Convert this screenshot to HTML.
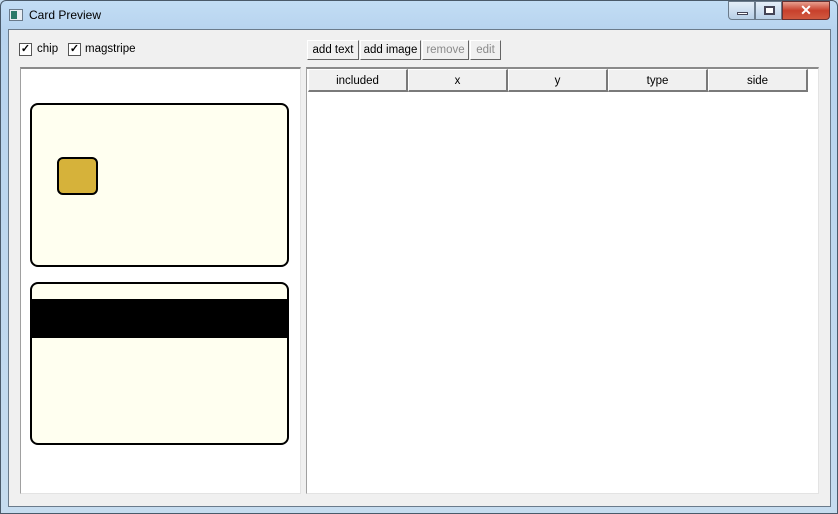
<!DOCTYPE html>
<html><head><style>
*{margin:0;padding:0;box-sizing:border-box}
body{width:838px;height:514px;overflow:hidden;background:#c4dcf0;font-family:"Liberation Sans",sans-serif;font-size:12px;position:relative}
.a{position:absolute}
.frame{left:0;top:0;width:838px;height:514px;background:linear-gradient(180deg,#c2ddf5 0,#b7d3ee 30px,#c6dcef 100%);border:1px solid #4a5a6a;border-radius:6px 6px 0 0}
.client{left:8px;top:29px;width:823px;height:478px;background:#f0f0f0;border:1px solid #6b7b8b}
.btn{top:40px;height:20px;background:#f0f0f0;border:1px solid #fff;border-right-color:#646464;border-bottom-color:#646464;text-align:center;line-height:19px;font-size:11.5px}
.th{top:69px;height:23px;background:#f0f0f0;border:1px solid #fff;border-right:2px solid #7a7a7a;border-bottom:2px solid #7a7a7a;text-align:center;line-height:23px;font-size:11.5px}
.card{background:#fffff0;border:2px solid #000;border-radius:8px}
.cb{width:13px;height:13px;border:1px solid #555;background:#fff;top:43px;font-size:11px;line-height:11px;text-align:center;font-weight:bold}
</style></head><body>
<div class="a frame"></div>
<div class="a" style="left:9px;top:9px;width:14px;height:12px;background:#e8eef4;border:1px solid #6a7a8a"><div style="width:6px;height:8px;background:#2a7a6a;margin:1px"></div></div>
<div class="a" style="left:29px;top:8px;font-size:12px;color:#000">Card Preview</div>
<div class="a" style="left:728px;top:1px;width:27px;height:19px;border:1px solid #6a7a8a;border-radius:0 0 0 4px;background:linear-gradient(#e4eef8,#b8cfe6)"><div style="margin:10px 0 0 8px;width:11px;height:3px;background:#fff;border:1px solid #445"></div></div>
<div class="a" style="left:755px;top:1px;width:27px;height:19px;border:1px solid #6a7a8a;background:linear-gradient(#e4eef8,#b8cfe6)"><div style="margin:4px 0 0 8px;width:11px;height:9px;border:2px solid #445;background:#fff"></div></div>
<div class="a" style="left:782px;top:1px;width:48px;height:19px;border:1px solid #6a3030;border-radius:0 0 4px 0;background:linear-gradient(#e8a090,#c8402c 50%,#d05a40);color:#fff;font-weight:bold;text-align:center;font-size:14px;line-height:17px">✕</div>
<div class="a client"></div>
<div class="a cb" style="left:19px">✓</div><div class="a" style="left:37px;top:43px;font-size:11.5px">chip</div>
<div class="a cb" style="left:68px">✓</div><div class="a" style="left:85px;top:43px;font-size:11.5px">magstripe</div>
<div class="a" style="left:20px;top:67px;width:281px;height:427px;background:#fff;border-left:1px solid #a0a0a0;border-top:2px solid #8a8a8a;border-right:1px solid #e3e3e3;border-bottom:1px solid #e3e3e3"></div>
<div class="a card" style="left:30px;top:103px;width:259px;height:164px"></div>
<div class="a" style="left:57px;top:157px;width:41px;height:38px;background:#d6b23a;border:2px solid #000;border-radius:6px"></div>
<div class="a card" style="left:30px;top:282px;width:259px;height:163px"></div>
<div class="a" style="left:31px;top:299px;width:257px;height:39px;background:#000"></div>
<div class="a btn" style="left:307px;width:52px">add text</div>
<div class="a btn" style="left:360px;width:61px">add image</div>
<div class="a btn" style="left:422px;width:47px;color:#8a8a8a">remove</div>
<div class="a btn" style="left:470px;width:31px;color:#8a8a8a">edit</div>
<div class="a" style="left:306px;top:67px;width:513px;height:427px;background:#fff;border-left:1px solid #a0a0a0;border-top:2px solid #8a8a8a;border-right:1px solid #e3e3e3;border-bottom:1px solid #e3e3e3"></div>
<div class="a th" style="left:308px;width:100px">included</div>
<div class="a th" style="left:408px;width:100px">x</div>
<div class="a th" style="left:508px;width:100px">y</div>
<div class="a th" style="left:608px;width:100px">type</div>
<div class="a th" style="left:708px;width:100px">side</div>
</body></html>
